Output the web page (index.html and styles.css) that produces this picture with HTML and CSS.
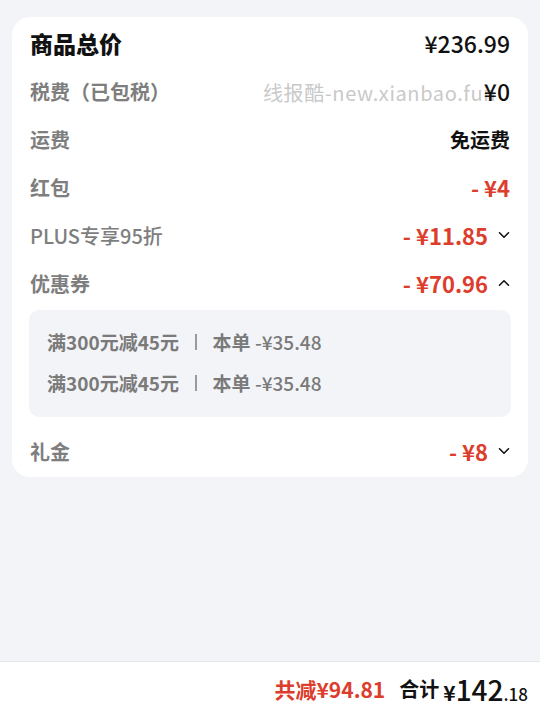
FILE: index.html
```html
<!DOCTYPE html>
<html lang="zh-CN">
<head>
  <meta charset="utf-8">
  <meta name="viewport" content="width=device-width, initial-scale=1.0">
  <title>订单金额</title>
  <link rel="stylesheet" href="styles.css">
</head>
<body>
  <div class="page">
    <div class="card">
      <div class="row">
        <span class="label total-label">商品总价</span>
        <span class="value total-value">¥236.99</span>
      </div>

      <div class="row">
        <span class="label">税费（已包税）</span>
        <span class="watermark">线报酷-new.xianbao.fun</span>
        <span class="value">¥0</span>
      </div>

      <div class="row">
        <span class="label">运费</span>
        <span class="value cn">免运费</span>
      </div>

      <div class="row">
        <span class="label">红包</span>
        <span class="value red">- ¥4</span>
      </div>

      <div class="row">
        <span class="label thin">PLUS专享95折</span>
        <span class="value red">- ¥11.85</span>
        <svg class="chev" viewBox="0 0 12 8"><path d="M1.5 1.8 6 6.2 10.5 1.8"/></svg>
      </div>

      <div class="row">
        <span class="label">优惠券</span>
        <span class="value red">- ¥70.96</span>
        <svg class="chev" viewBox="0 0 12 8"><path d="M1.5 6.2 6 1.8 10.5 6.2"/></svg>
      </div>

      <!-- coupon detail -->
      <div class="coupons">
        <div class="coupon">
          <span>满300元减45元</span>
          <span class="sep"></span>
          <span>本单 <span class="num">-¥35.48</span></span>
        </div>
        <div class="coupon">
          <span>满300元减45元</span>
          <span class="sep"></span>
          <span>本单 <span class="num">-¥35.48</span></span>
        </div>
      </div>

      <div class="row">
        <span class="label">礼金</span>
        <span class="value red">- ¥8</span>
        <svg class="chev" viewBox="0 0 12 8"><path d="M1.5 1.8 6 6.2 10.5 1.8"/></svg>
      </div>
    </div>

    <div class="footer">
      <span class="saved">共减¥94.81</span>
      <span class="sum-label">合计</span>
      <span class="sum"><span class="yen">¥</span>142<span class="cents">.18</span></span>
    </div>
  </div>
</body>
</html>
```

FILE: styles.css
```css
html, body {
  margin: 0;
  padding: 0;
}

body {
  background: #f3f4f8;
  font-family: "Noto Sans CJK SC", "Noto Sans", sans-serif;
  color: #111;
}

.page {
  display: flex;
  flex-direction: column;
  height: 100vh;
  box-sizing: border-box;
  padding-top: 17px;
}

.card {
  margin: 0 12px;
  padding: 2px 18px 2px 18px;
  background: #fff;
  border-radius: 18px;
}

.row {
  position: relative;
  display: flex;
  align-items: center;
  height: 48px;
}

.label {
  font-size: 20px;
  font-weight: 700;
  color: #7e7e7e;
  flex: 1;
}

.label.thin {
  font-weight: 500;
}

.total-label {
  font-size: 23px;
  font-weight: 900;
  color: #111;
}

.value {
  font-size: 23px;
  font-weight: 500;
  color: #111;
  position: relative;
  z-index: 2;
}

.value.cn {
  font-size: 20px;
  font-weight: 700;
}

.total-value {
  font-size: 23px;
}

.red {
  color: #dd3d2c;
  font-weight: 700;
  font-size: 22px;
}

.chev {
  width: 12px;
  height: 8px;
  margin-left: 10px;
  fill: none;
  stroke: #111;
  stroke-width: 1.6;
  stroke-linecap: round;
  stroke-linejoin: round;
}

.watermark {
  position: absolute;
  left: 233px;
  top: 11px;
  font-size: 20px;
  font-weight: 400;
  letter-spacing: 0.6px;
  color: #c9c9c9;
  z-index: 1;
  white-space: nowrap;
}

.coupons {
  margin: 3px -1px 10px -1px;
  padding: 11px 18px 14px;
  background: #f3f4f8;
  border-radius: 10px;
}

.coupon {
  display: flex;
  align-items: center;
  height: 41px;
  font-size: 19px;
  font-weight: 700;
  color: #7a7a7a;
}

.coupon .num {
  font-weight: 500;
}

.sep {
  width: 1.5px;
  height: 16px;
  background: #9a9a9a;
  margin: 0 16px;
}

.footer {
  margin-top: auto;
  height: 53px;
  background: #fff;
  border-top: 1px solid #e6e7eb;
  display: flex;
  align-items: center;
  justify-content: flex-end;
  padding-right: 12px;
}

.saved {
  font-size: 21px;
  font-weight: 700;
  color: #dd3d2c;
  margin-right: 14px;
}

.sum-label {
  font-size: 20px;
  font-weight: 700;
  color: #111;
  margin-right: 4px;
}

.sum {
  font-size: 28px;
  font-weight: 500;
  color: #111;
}

.sum .yen {
  font-size: 21px;
  font-weight: 700;
}

.sum .cents {
  font-size: 17px;
}
```
